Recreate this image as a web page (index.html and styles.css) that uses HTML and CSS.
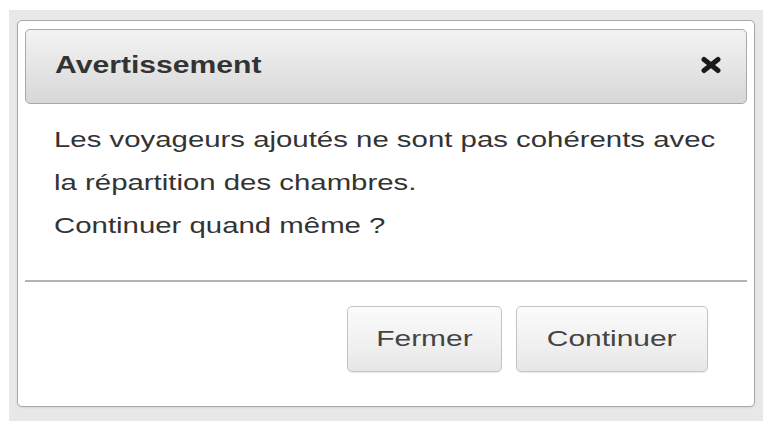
FILE: index.html
```html
<!DOCTYPE html>
<html lang="fr">
<head>
<meta charset="utf-8">
<title>Avertissement</title>
<link rel="stylesheet" href="styles.css">
</head>
<body>
<div class="backdrop">
  <div class="dialog">
    <div class="dialog-header">
      <span class="dialog-title">Avertissement</span>
      <svg class="close-icon" width="22" height="18" viewBox="0 0 22 18" aria-label="Fermer">
        <path d="M4 3.5 L18 14.5 M18 3.5 L4 14.5" stroke="#1a1a1a" stroke-width="5" stroke-linecap="round"/>
      </svg>
    </div>
    <div class="dialog-body">
      <p>Les voyageurs ajoutés ne sont pas cohérents avec<br>la répartition des chambres.<br>Continuer quand même ?</p>
    </div>
    <div class="dialog-footer">
      <button class="btn btn-close"><span class="btn-label">Fermer</span></button>
      <button class="btn btn-continue"><span class="btn-label">Continuer</span></button>
    </div>
  </div>
</div>
</body>
</html>
```
FILE: styles.css
```css
html, body {
  margin: 0;
  padding: 0;
  background: #ffffff;
  overflow: hidden;
}
body {
  font-family: "Liberation Sans", Arial, sans-serif;
  padding: 10px 12px 9px 9px;
}
.backdrop {
  background: #e8e8e8;
  padding: 10px 8px 14px 8px;
}
.dialog {
  background: #ffffff;
  border: 1px solid #a9a9a9;
  border-radius: 5px;
  padding: 8px 7px;
  box-shadow: 0 1px 2px rgba(0,0,0,0.08);
}
.dialog-header {
  height: 73px;
  display: flex;
  align-items: center;
  justify-content: space-between;
  border: 1px solid #a8a8a8;
  border-radius: 5px;
  background: linear-gradient(to bottom, #f3f3f3 0%, #e4e4e4 55%, #d7d7d7 100%);
  padding: 0 24px 0 29px;
}
.dialog-title {
  display: inline-block;
  font-size: 23px;
  font-weight: bold;
  color: #333333;
  margin-top: -2px;
  transform: scaleX(1.31);
  transform-origin: left center;
}
.close-icon {
  display: block;
  margin-top: -4px;
}
.dialog-body {
  padding: 14px 29px 33px 29px;
  border-bottom: 2px solid #b3b3b3;
}
.dialog-body p {
  display: inline-block;
  margin: 0;
  font-size: 22px;
  line-height: 43px;
  color: #333333;
  vertical-align: top;
  transform: scaleX(1.335);
  transform-origin: left top;
}
.dialog-footer {
  display: flex;
  justify-content: flex-end;
  gap: 14px;
  padding: 24px 39px 26px 0;
}
.btn {
  height: 66px;
  font-family: "Liberation Sans", Arial, sans-serif;
  font-size: 22px;
  color: #444444;
  background: linear-gradient(to bottom, #fbfbfb 0%, #f0f0f0 60%, #e6e6e6 100%);
  border: 1px solid #c4c4c4;
  border-radius: 5px;
  box-shadow: 0 1px 1px rgba(0,0,0,0.08);
}
.btn-label {
  display: inline-block;
  transform: scaleX(1.36);
  transform-origin: center center;
}
.btn-close {
  width: 155px;
}
.btn-continue {
  width: 192px;
}
```
